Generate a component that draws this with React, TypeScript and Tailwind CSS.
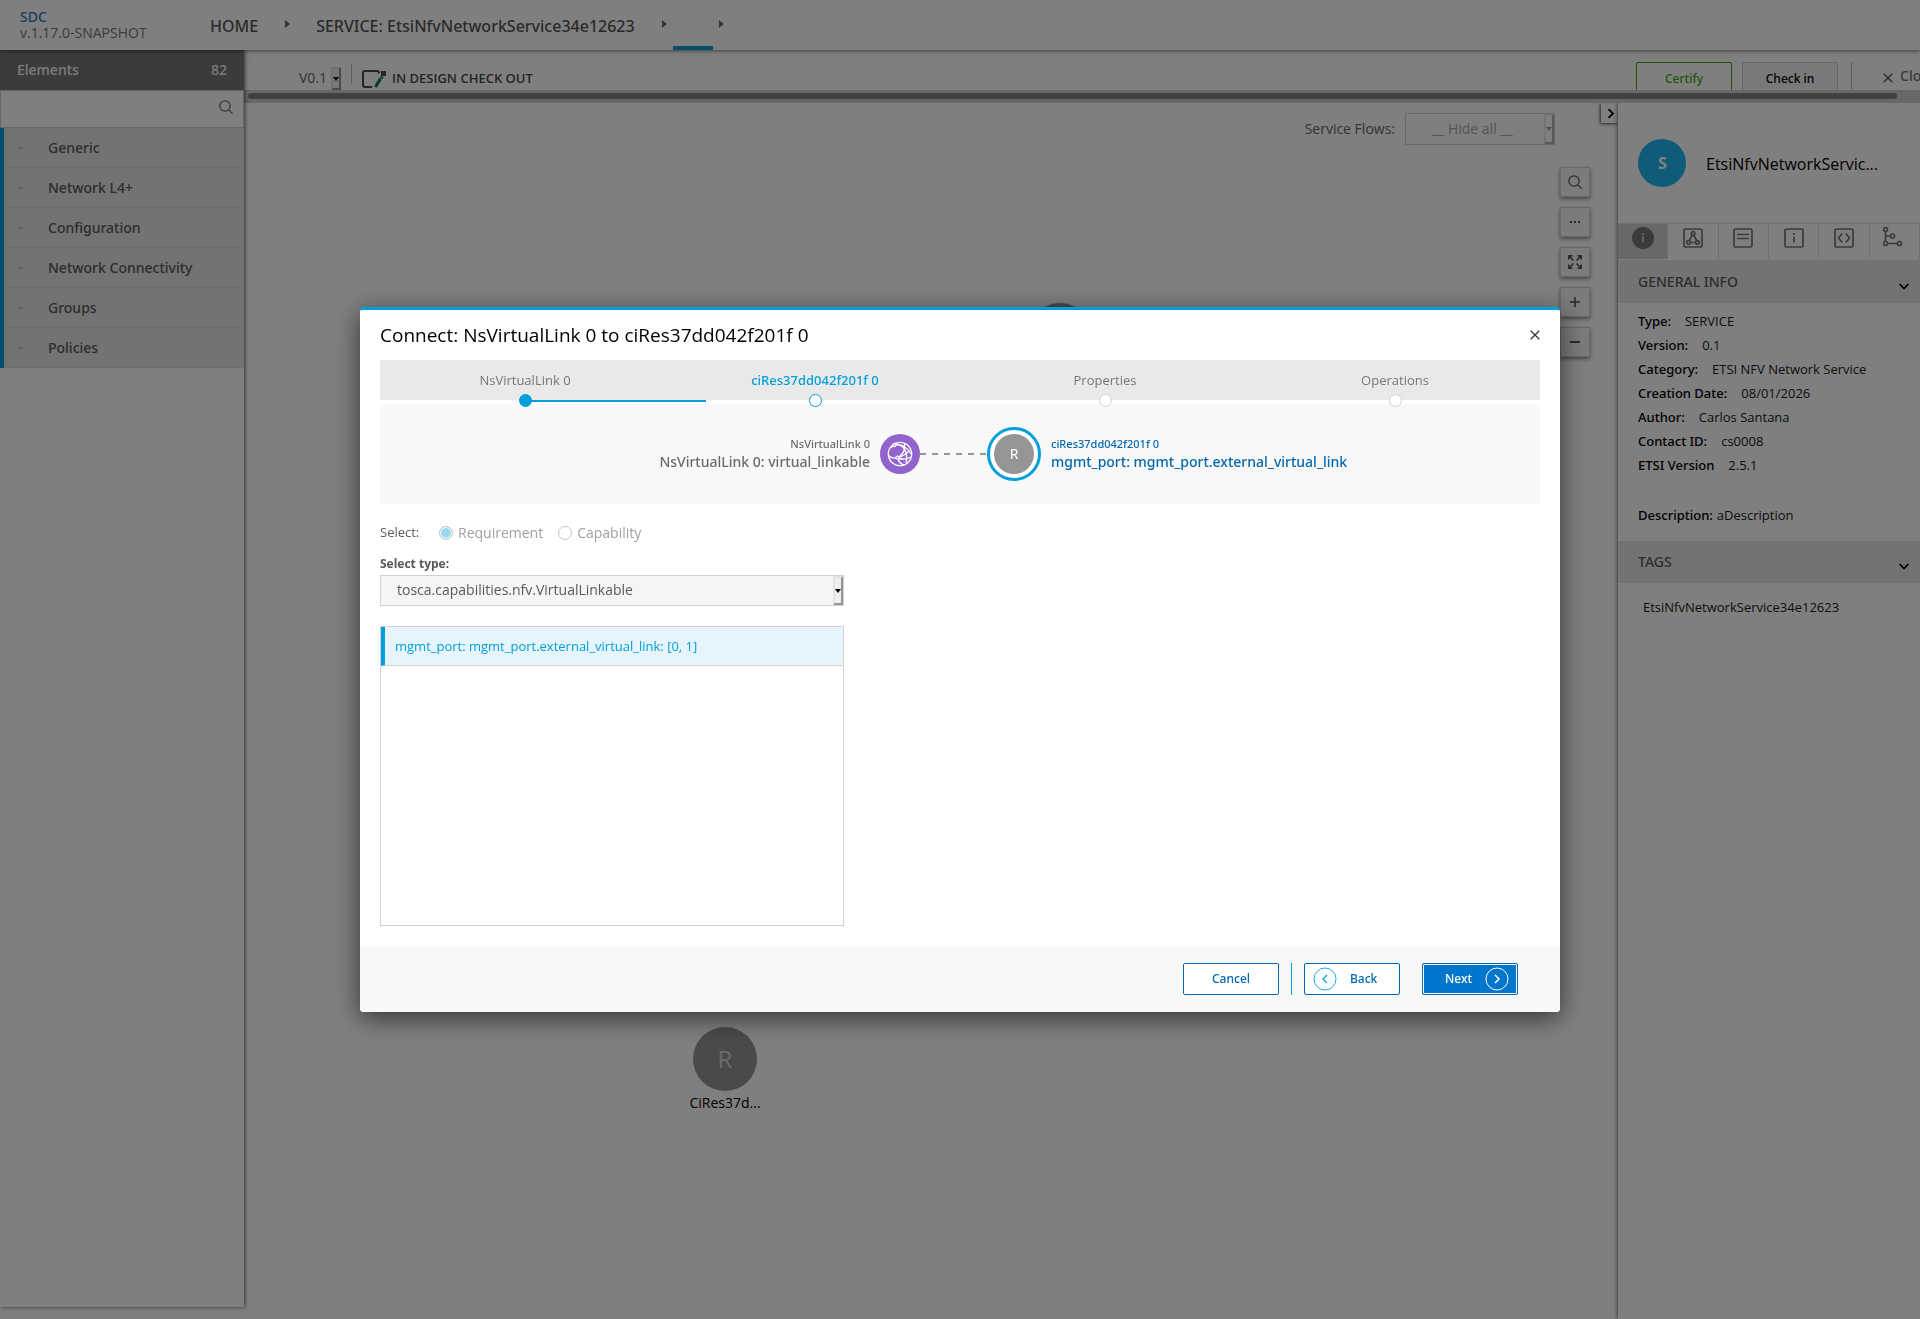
import type { ReactNode } from "react";
import clsx from "clsx";

const categories = ["Generic", "Network L4+", "Configuration", "Network Connectivity", "Groups", "Policies"];

const generalInfo = [
  { label: "Type:", value: "SERVICE" },
  { label: "Version:", value: "0.1" },
  { label: "Category:", value: "ETSI NFV Network Service" },
  { label: "Creation Date:", value: "08/01/2026" },
  { label: "Author:", value: "Carlos Santana" },
  { label: "Contact ID:", value: "cs0008" },
  { label: "ETSI Version", value: "2.5.1" },
];

const steps = [
  { name: "NsVirtualLink 0", state: "done" },
  { name: "ciRes37dd042f201f 0", state: "current" },
  { name: "Properties", state: "todo" },
  { name: "Operations", state: "todo" },
];

// medium-weight face used for titles, labels and buttons
const strong = "font-['Noto_Sans',sans-serif] font-medium";

function SearchIcon({ size }: { size: number }) {
  return (
    <svg width={size} height={size} viewBox="0 0 14 14" fill="none" stroke="currentColor" strokeWidth="1.2">
      <circle cx="6" cy="6" r="5.2" />
      <path d="M9.8 9.8l3.7 3.9" />
    </svg>
  );
}

function CloseIcon({ size }: { size: number }) {
  return (
    <svg width={size} height={size} viewBox="0 0 10 10" fill="none" stroke="currentColor" strokeWidth="1.3">
      <path d="M.7.7l8.6 8.6M9.3.7L.7 9.3" />
    </svg>
  );
}

function Chevron({ className }: { className?: string }) {
  return (
    <svg className={className} width="10" height="7" viewBox="0 0 10 7" fill="none" stroke="currentColor" strokeWidth="1.8">
      <path d="M.7 1L5 5.5 9.3 1" />
    </svg>
  );
}

function Crumb() {
  return (
    <svg width="5" height="8" viewBox="0 0 5 8" fill="#6b6b6b">
      <path d="M0 0l5 4-5 4z" />
    </svg>
  );
}

function SelectArrow({ muted }: { muted?: boolean }) {
  return (
    <span
      className={clsx(
        "pointer-events-none absolute inset-y-0 right-0 flex w-[10px] items-center justify-center border-2 border-t-[#e3e3e3] border-l-[#e3e3e3] border-r-[#949494] border-b-[#949494]",
        muted ? "text-[#777] opacity-70" : "bg-[#efefef] text-black"
      )}
    >
      <svg width="6" height="4" viewBox="0 0 6 4" fill="currentColor" className="shrink-0">
        <path d="M0 0h6L3 4z" />
      </svg>
    </span>
  );
}

function TopBar() {
  return (
    <header className="relative z-20 flex h-[50px] shrink-0 bg-white shadow-[0_1px_4px_rgba(0,0,0,0.5)]">
      <div className="w-[210px] pt-[9px] pl-5 text-sm leading-4">
        <a href="#" className={clsx("block text-[#3b7bb5]", strong)}>SDC</a>
        <span className="block text-[#777]">v.1.17.0-SNAPSHOT</span>
      </div>
      <nav className={clsx("flex text-base text-[#555]", strong)}>
        <a href="#" className="flex items-center pt-px">HOME</a>
        <span className="flex w-[58px] items-center justify-center pb-[2px]"><Crumb /></span>
        <a href="#" className="flex items-center pt-px">SERVICE: EtsiNfvNetworkService34e12623</a>
        <span className="flex w-[38px] items-center justify-end pr-[6px] pb-[2px]"><Crumb /></span>
        <span className="h-[50px] w-10 border-b-4 border-[#009fdb]" />
        <span className="flex items-center pb-[2px] pl-[6px]"><Crumb /></span>
      </nav>
    </header>
  );
}

function Sidebar() {
  return (
    <aside className="z-10 mb-3 w-[244px] shrink-0 bg-white shadow-[1px_0_4px_rgba(0,0,0,0.6)]">
      <div className={clsx("flex h-10 items-center justify-between bg-[#777] px-[17px] text-sm text-[#f8f8f8]", strong)}>
        <span>Elements</span>
        <span>82</span>
      </div>
      <div className="flex h-[38px] items-center border border-[#cdcdcd] pr-[10px]">
        <input type="text" aria-label="Search elements" className="h-full min-w-0 flex-1 px-3 text-sm outline-none" />
        <span className="pb-1 text-[#666]"><SearchIcon size={14} /></span>
      </div>
      <ul className="border-l-4 border-[#009fdb]">
        {categories.map((name) => (
          <li key={name} className="border-b border-[#d6d6d6] bg-[#e6e6e6]">
            <button className={clsx("flex h-[39px] w-full items-center text-sm text-[#5a5a5a]", strong)}>
              <svg width="5" height="4" viewBox="0 0 5 4" fill="none" stroke="#888" className="mr-[25px] ml-[14px]">
                <path d="M.5.8l2 2 2-2" />
              </svg>
              {name}
            </button>
          </li>
        ))}
      </ul>
    </aside>
  );
}

function ActionBar() {
  return (
    <div className="h-[53px] shrink-0 overflow-hidden">
      <div className="flex h-10 w-[calc(100%+24px)] items-start overflow-hidden bg-white">
        <label className="relative mt-[17px] ml-[53px] flex h-[23px] w-11">
          <span className="sr-only">Version</span>
          <select className="h-[22px] w-full appearance-none pl-[2px] text-sm leading-[22px] text-[#666] outline-none">
            <option>V0.1</option>
          </select>
          <SelectArrow />
        </label>
        <div className="mt-[14px] ml-[10px] h-5 w-px bg-[#bbb]" />
        <svg className="mt-5 ml-[10px] shrink-0" width="25" height="19" viewBox="0 0 25 19" fill="none">
          <path d="M17 3.5V3a2 2 0 0 0-2-2H3a2 2 0 0 0-2 2v12a2 2 0 0 0 2 2h7" stroke="#4a4a4a" strokeWidth="2" />
          <path d="M19 1h5v5h-5z" fill="#4a4a4a" />
          <path d="M13.5 17l5-8.5" stroke="#0a7a43" strokeWidth="3.2" />
          <path d="M19.3 8.3l1-1.8" stroke="#0a7a43" strokeWidth="3" />
        </svg>
        <span className="mt-[17px] ml-[5px] text-[13px] leading-[22px] font-semibold text-[#4a4a4a]">IN DESIGN CHECK OUT</span>
        <div className={clsx("mt-3 ml-auto flex shrink-0 items-start", strong)}>
          <button className="h-8 w-24 rounded-xs border border-[#4ca90c] pt-px text-xs text-[#4ca90c]">Certify</button>
          <button className="ml-[10px] h-8 w-24 rounded-xs border border-[#cdcdcd] bg-[#f2f2f2] pt-px text-xs text-black">Check in</button>
          <div className="ml-[13px] h-8 w-px bg-[#bbb]" />
          <button className="ml-[31px] flex h-7 w-[61px] items-center gap-[7px] text-sm text-[#777]">
            <span className="pt-1 text-[#555]"><CloseIcon size={10} /></span>
            Close
          </button>
        </div>
      </div>
      <div className="h-[13px] bg-[#d2cfcf] pt-[3px] pr-[23px] pl-1">
        <div className="h-[6px] rounded-full bg-[#7c8482]" />
      </div>
    </div>
  );
}

function CanvasButton({ label, children }: { label: string; children: ReactNode }) {
  return (
    <button
      aria-label={label}
      className="flex size-[30px] items-center justify-center border border-[#d0d0d0] bg-[#f6f6f6] text-[#555] shadow-[0_2px_4px_rgba(0,0,0,0.45)]"
    >
      {children}
    </button>
  );
}

function CanvasTools() {
  return (
    <div className="flex flex-col gap-[10px]">
      <CanvasButton label="Search"><SearchIcon size={14} /></CanvasButton>
      <CanvasButton label="More">
        <svg width="10" height="2" viewBox="0 0 10 2" fill="currentColor">
          <path d="M0 0h2v2H0zM4 0h2v2H4zM8 0h2v2H8z" />
        </svg>
      </CanvasButton>
      <CanvasButton label="Fit to screen">
        <svg width="14" height="14" viewBox="0 0 14 14" fill="none" stroke="currentColor" strokeWidth="1.6">
          <path d="M.8 4.5V.8h3.7M9.5.8h3.7v3.7M13.2 9.5v3.7H9.5M4.5 13.2H.8V9.5M1 1l4.5 4.5M13 1L8.5 5.5M13 13L8.5 8.5M1 13l4.5-4.5" />
        </svg>
      </CanvasButton>
      <CanvasButton label="Zoom in">
        <svg width="10" height="10" viewBox="0 0 10 10" stroke="currentColor" strokeWidth="1.6">
          <path d="M5 0v10M0 5h10" />
        </svg>
      </CanvasButton>
      <CanvasButton label="Zoom out">
        <svg width="10" height="2" viewBox="0 0 10 2" fill="currentColor">
          <path d="M0 0h10v2H0z" />
        </svg>
      </CanvasButton>
    </div>
  );
}

function Canvas() {
  return (
    <main className="relative min-w-0 flex-1 bg-white">
      <div className="flex justify-end">
        <div className="mt-[10px] mr-[46px] flex items-center gap-[10px] text-sm">
          <label htmlFor="flows" className="text-[#666]">Service Flows:</label>
          <div className="relative h-8 w-[150px] border border-[#d0d0d0]">
            <select id="flows" className="h-full w-full appearance-none pl-[26px] text-sm text-[#aaa] outline-none">
              <option>__ Hide all __</option>
            </select>
            <SelectArrow muted />
          </div>
        </div>
        <button
          aria-label="Collapse panel"
          className="flex h-5 w-[17px] shrink-0 items-center justify-center bg-white pt-px pl-[2px] shadow-[-1px_1px_3px_rgba(0,0,0,0.7)]"
        >
          <Chevron className="shrink-0 -rotate-90" />
        </button>
      </div>
      <div className="mt-[22px] flex justify-end pr-7">
        <CanvasTools />
      </div>

      {/* composition nodes */}
      <div className="absolute top-[200px] left-[784px] size-16 rounded-full bg-[#959595]" />
      <div className="absolute top-[924px] left-[431px] flex w-[100px] flex-col items-center">
        <div className="flex size-16 items-center justify-center rounded-full bg-[#959595] text-2xl text-[#d4d4d4]">R</div>
        <span className="text-sm leading-6 text-black">CiRes37d...</span>
      </div>
    </main>
  );
}

const tabIcons = [
  {
    label: "General info",
    icon: (
      <>
        <circle cx="11" cy="11" r="11" fill="currentColor" stroke="none" />
        <path d="M11 9.5v6M11 6v2" stroke="#d0d0d0" />
      </>
    ),
  },
  {
    label: "Composition",
    icon: (
      <>
        <rect x="2" y="2" width="18" height="18" rx="1.5" />
        <circle cx="11" cy="6.5" r="1.8" />
        <circle cx="6.5" cy="15.5" r="1.8" />
        <circle cx="15.5" cy="15.5" r="1.8" />
        <path d="M10.2 8.2l-3 5.6M11.8 8.2l3 5.6M8.3 15.5h5.4" />
      </>
    ),
  },
  {
    label: "Artifacts",
    icon: (
      <>
        <rect x="2" y="2" width="18" height="18" rx="1.5" />
        <path d="M5 7.5h12M5 11.5h12" />
      </>
    ),
  },
  {
    label: "Information artifacts",
    icon: (
      <>
        <rect x="2" y="2" width="18" height="18" rx="1.5" />
        <path d="M11 9.5v6M11 6v2" />
      </>
    ),
  },
  {
    label: "API artifacts",
    icon: (
      <>
        <rect x="2" y="2" width="18" height="18" rx="1.5" />
        <path d="M9.2 6.5L5.5 11l3.7 4.5M12.8 6.5l3.7 4.5-3.7 4.5" />
      </>
    ),
  },
  {
    label: "Relations",
    icon: (
      <>
        <circle cx="2.5" cy="2.5" r="2" />
        <circle cx="9.5" cy="9" r="2" />
        <circle cx="2.5" cy="16.5" r="2" />
        <circle cx="16.5" cy="16.5" r="2" />
        <path d="M2.5 4.5v10M2.5 9h5M4.5 16.5h10" />
      </>
    ),
  },
];

function SectionTitle({ children }: { children: ReactNode }) {
  return (
    <div className="flex h-[42px] items-center justify-between bg-[#e6e6e6] pr-[11px] pl-5">
      <h2 className={clsx("text-sm text-[#5a5a5a]", strong)}>{children}</h2>
      <Chevron className="mt-[9px]" />
    </div>
  );
}

function DetailsPanel() {
  return (
    <aside className="z-10 w-[302px] shrink-0 bg-white shadow-[-1px_0_4px_rgba(0,0,0,0.5)]">
      <div className="flex h-[120px] items-center gap-5 pl-5">
        <span className="flex size-12 shrink-0 items-center justify-center rounded-full bg-[#1eb9f3] pl-px text-base font-bold text-white">S</span>
        <h1 className="pt-[2px] text-base text-black">EtsiNfvNetworkServic...</h1>
      </div>
      <div className="flex border-b border-[#e6e6e6] pb-px">
        {tabIcons.map((tab, i) => (
          <button
            key={tab.label}
            aria-label={tab.label}
            className={clsx(
              "flex h-9 flex-1 justify-center border-t border-r border-[#e0e0e0] pt-[3px] text-[#777]",
              i === 0 && "bg-[#d0d0d0]"
            )}
          >
            <svg width="22" height="22" viewBox="0 0 22 22" fill="none" stroke="currentColor" strokeWidth="1.7">
              {tab.icon}
            </svg>
          </button>
        ))}
      </div>
      <SectionTitle>GENERAL INFO</SectionTitle>
      <dl className="pt-[6px] pl-5 text-[13px] leading-6 text-black">
        {generalInfo.map((row) => (
          <div key={row.label} className="flex gap-[14px]">
            <dt className={strong}>{row.label}</dt>
            <dd className="text-[#191919]">{row.value}</dd>
          </div>
        ))}
        <div className="mt-[26px] mb-[14px] flex gap-1">
          <dt className={strong}>Description:</dt>
          <dd className="text-[#191919]">aDescription</dd>
        </div>
      </dl>
      <SectionTitle>TAGS</SectionTitle>
      <p className="pt-3 pl-[25px] text-[13px] leading-6 text-[#191919]">EtsiNfvNetworkService34e12623</p>
    </aside>
  );
}

function Steps() {
  return (
    <ol className="flex h-11 border-b-4 border-white bg-[#e9e9e9] text-[13px]">
      {steps.map((step) => (
        <li key={step.name} className="relative flex flex-1 justify-center">
          <span
            className={clsx(
              "mt-[11px] leading-[18px]",
              step.state === "current" ? [strong, "text-[#009fdb]"] : "text-[#777]"
            )}
          >
            {step.name}
          </span>
          {step.state === "done" && <span className="absolute top-10 left-1/2 h-[2px] w-5/8 bg-[#009fdb]" />}
          <span
            className={clsx(
              "absolute top-[34px] left-1/2 -ml-[6px] size-[13px] rounded-full border",
              step.state === "done" && "border-[#009fdb] bg-[#009fdb]",
              step.state === "current" && "border-[#009fdb] bg-white",
              step.state === "todo" && "border-[#d2d2d2] bg-white"
            )}
          />
        </li>
      ))}
    </ol>
  );
}

function Connection() {
  return (
    <div className={clsx("flex h-[100px] items-center bg-[#f8f8f8]", strong)}>
      <div className="flex-1 pr-[10px] text-right text-[#6b6b6b]">
        <div className="text-[11px] leading-4">NsVirtualLink 0</div>
        <div className="text-sm leading-5">NsVirtualLink 0: virtual_linkable</div>
      </div>
      <span className="flex size-10 items-center justify-center rounded-full bg-[#9063cd]">
        <svg width="26" height="26" viewBox="0 0 26 26" fill="none" stroke="white" strokeWidth="1.3">
          <circle cx="13" cy="13" r="11.7" />
          <path d="M3.5 7C8 2 15 3 18 9c1.5 3 2 8 1 13M8 3.5c6-1 13 3 16 9.5M1.5 14.5c2.5 2.5 5 3 7.5 2.3M12 16.2c5-1 8-4 10.5-7M17.5 2.5c.8 6-1.5 11-6 13.5M12 17.5c4 1 8 .5 12-1.5M11 18c1 3 3.5 5.5 6.5 6" />
          <circle cx="7.5" cy="4" r="1.5" fill="#9063cd" />
          <circle cx="10.5" cy="16.7" r="1.5" fill="#9063cd" />
        </svg>
      </span>
      <svg width="67" height="2" viewBox="0 0 67 2" stroke="#979797" strokeWidth="2" strokeDasharray="6 6">
        <path d="M0 1h67" />
      </svg>
      <span className="flex size-[54px] items-center justify-center rounded-full border-3 border-[#009fdb] bg-white">
        <span className="flex size-10 items-center justify-center rounded-full bg-[#959595] text-sm font-normal text-white">R</span>
      </span>
      <div className="w-[499px] pl-[10px] text-[#0568ae]">
        <div className="text-[11px] leading-4">ciRes37dd042f201f 0</div>
        <div className="text-sm leading-5">mgmt_port: mgmt_port.external_virtual_link</div>
      </div>
    </div>
  );
}

function Radio({ label, checked }: { label: string; checked?: boolean }) {
  return (
    <label className="flex items-center gap-[5px] text-sm text-[#a0a0a0]">
      <input
        type="radio"
        name="direction"
        defaultChecked={checked}
        disabled
        className="size-[14px] appearance-none rounded-full border border-[#c4c4c4] bg-white checked:bg-[#99d9f1] checked:shadow-[inset_0_0_0_1px_white]"
      />
      {label}
    </label>
  );
}

function RoundArrow({ flip }: { flip?: boolean }) {
  return (
    <svg width="24" height="24" viewBox="0 0 24 24" fill="none" stroke="currentColor" className={clsx(flip && "rotate-180")}>
      <circle cx="12" cy="12" r="11" />
      <path d="M10 8l4 4-4 4" strokeWidth="1.5" />
    </svg>
  );
}

function ConnectDialog() {
  return (
    <section
      role="dialog"
      aria-labelledby="dialog-title"
      className="w-[1200px] max-w-full overflow-hidden rounded border-t-3 border-[#009fdb] bg-white shadow-[0_6px_26px_rgba(0,0,0,0.6)]"
    >
      <div className="px-5 pb-5">
        <div className="flex h-[50px] items-center justify-between">
          <h2 id="dialog-title" className="text-[19px] text-black">Connect: NsVirtualLink 0 to ciRes37dd042f201f 0</h2>
          <button aria-label="Close" className="text-[#333]"><CloseIcon size={10} /></button>
        </div>
        <Steps />
        <Connection />
        <div className="mt-[19px] flex h-5 items-center">
          <span className="w-[59px] text-[13px] text-[#5a5a5a]">Select:</span>
          <div className="flex gap-[15px]">
            <Radio label="Requirement" checked />
            <Radio label="Capability" />
          </div>
        </div>
        <div className="mt-3 w-2/5">
          <label htmlFor="cap-type" className="block text-xs leading-[18px] font-bold text-[#5a5a5a]">Select type:</label>
          <div className="relative mt-[2px] h-[31px] border border-[#d2d2d2] bg-[#f6f5f4]">
            <select id="cap-type" className="h-full w-full appearance-none pb-[2px] pl-4 text-sm text-[#5a5a5a] outline-none">
              <option>tosca.capabilities.nfv.VirtualLinkable</option>
            </select>
            <SelectArrow />
          </div>
          <ul className="mt-5 h-[300px] border border-[#d2d2d2]">
            <li className="border-b border-l-4 border-b-[#d2d2d2] border-l-[#009fdb] bg-[#e6f5fb]">
              <button className="h-[38px] w-full pt-px pl-[10px] text-left text-[13px] text-[#009fdb]">
                mgmt_port: mgmt_port.external_virtual_link: [0, 1]
              </button>
            </li>
          </ul>
        </div>
      </div>
      <footer className={clsx("flex h-[66px] items-center justify-end bg-[#f8f8f8] pr-[42px] text-xs", strong)}>
        <button className="h-8 w-24 rounded-xs border border-[#0568ae] bg-white text-[#0568ae]">Cancel</button>
        <div className="mr-3 ml-3 h-8 w-px bg-[#009fdb]" />
        <button className="flex h-8 w-24 items-center gap-[13px] rounded-xs border border-[#0568ae] bg-white pl-2 text-[#0568ae]">
          <span className="text-[#1eabe0]"><RoundArrow flip /></span>
          Back
        </button>
        <button className="ml-[22px] flex h-8 w-24 items-center justify-between rounded-xs border border-[#0568ae] bg-[#0077cc] pr-2 pl-[22px] text-white shadow-[inset_0_0_0_1px_white]">
          Next
          <RoundArrow />
        </button>
      </footer>
    </section>
  );
}

export default function App() {
  return (
    <div className="flex min-h-screen flex-col overflow-hidden bg-white font-['Open_Sans',sans-serif]">
      <TopBar />
      <div className="flex flex-1">
        <Sidebar />
        <div className="flex min-w-0 flex-1 flex-col">
          <ActionBar />
          <div className="flex flex-1 overflow-hidden">
            <Canvas />
            <DetailsPanel />
          </div>
        </div>
      </div>
      <div className="fixed inset-0 z-50 flex items-center justify-center bg-black/50">
        <ConnectDialog />
      </div>
    </div>
  );
}
